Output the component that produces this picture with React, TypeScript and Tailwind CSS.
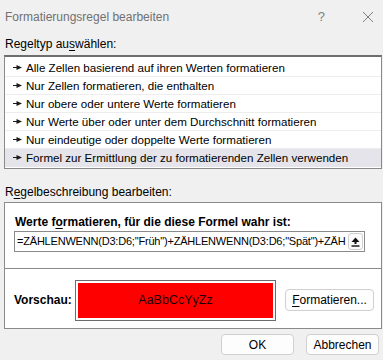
import React from "react";

const ruleTypes = [
    "Alle Zellen basierend auf ihren Werten formatieren",
    "Nur Zellen formatieren, die enthalten",
    "Nur obere oder untere Werte formatieren",
    "Nur Werte über oder unter dem Durchschnitt formatieren",
    "Nur eindeutige oder doppelte Werte formatieren",
    "Formel zur Ermittlung der zu formatierenden Zellen verwenden",
];

function RowArrow() {
    return (
        <svg width="9" height="7" viewBox="0 0 9 7" className="shrink-0">
            <rect x="0" y="3" width="5" height="1" fill="#1a1a1a" />
            <polygon points="3.5,1 9,3.5 3.5,6" fill="#1a1a1a" />
        </svg>
    );
}

function UploadIcon() {
    return (
        <svg width="9" height="10" viewBox="0 0 9 10">
            <polygon points="4.5,0.5 8.5,5 5.5,5 5.5,7 3.5,7 3.5,5 0.5,5" fill="#111" />
            <rect x="0.5" y="8.3" width="8" height="1.4" fill="#111" />
        </svg>
    );
}

export default function App() {
    return (
        <div
            className="w-[383px] h-[360px] bg-[#f0f0f0] overflow-hidden flex flex-col text-[12px] text-black"
            style={{ fontFamily: '"Liberation Sans", Arial, sans-serif' }}
        >
            {/* Title bar */}
            <div className="h-[33px] flex items-center justify-between pl-[5px] pr-[9px]">
                <span className="text-[12px] text-[#707070]">Formatierungsregel bearbeiten</span>
                <div className="flex items-center gap-[37px] text-[#808080]">
                    <span className="text-[13px]">?</span>
                    <svg width="12" height="12" viewBox="0 0 12 12">
                        <path d="M1 1 L11 11 M11 1 L1 11" stroke="#808080" strokeWidth="1" />
                    </svg>
                </div>
            </div>

            {/* Rule type */}
            <div className="pl-[5px] h-[22px] flex items-center leading-none">
                Regeltyp au<span className="underline underline-offset-2">s</span>wählen:
            </div>
            <div className="ml-[4px] mr-px h-[114px] bg-white border border-[#8a8a8a] border-t-2 border-t-[#6e6e6e] pt-[2px] flex flex-col text-[11.6px]">
                {ruleTypes.map((t, i) => (
                    <div
                        key={t}
                        className={`h-[18px] flex items-center gap-[4px] pl-[8px] border-b ${
                            i === ruleTypes.length - 1 ? "bg-[#e4e4ea] border-transparent" : "border-[#ededed]"
                        }`}
                    >
                        <RowArrow />
                        <span className="leading-none whitespace-nowrap">{t}</span>
                    </div>
                ))}
            </div>

            {/* Rule description */}
            <div className="pl-[5px] h-[33px] flex items-end pb-[4px] leading-none">
                R<span className="underline underline-offset-2">e</span>gelbeschreibung bearbeiten:
            </div>
            <div className="ml-[4px] mr-px h-[127px] bg-white border border-[#8a8a8a] flex flex-col">
                <div className="h-[66px] border-b border-[#8a8a8a] flex flex-col pl-[9px] pr-[16px]">
                    <div className="h-[27px] flex items-end pb-[2px] pl-[1px] font-bold leading-none">
                        Werte f<span className="underline underline-offset-2">o</span>rmatieren, für die diese Formel wahr ist:
                    </div>
                    <div className="mt-[1px] h-[21px] border border-[#8a8a8a] flex items-center pl-[2px] pr-[1px]">
                        <span className="flex-1 whitespace-nowrap overflow-hidden leading-none text-[11px] tracking-[-0.2px]">
                            =ZÄHLENWENN(D3:D6;"Früh")+ZÄHLENWENN(D3:D6;"Spät")+ZÄH
                        </span>
                        <div className="w-[15px] h-[17px] rounded-[3px] border border-[#cfcfcf] bg-[#fbfbfb] flex items-center justify-center">
                            <UploadIcon />
                        </div>
                    </div>
                </div>
                <div className="flex-1 flex items-center pl-[9px] pr-[6px] pt-[3px]">
                    <span className="w-[61px] font-bold leading-none">Vorschau:</span>
                    <div className="w-[201px] h-[41px] border border-[#6b6b6b] p-[2px] bg-white">
                        <div className="w-full h-full bg-[#ff0000] flex items-center justify-center text-[12.5px] text-[#1a0000]">
                            AaBbCcYyZz
                        </div>
                    </div>
                    <button className="ml-[9px] w-[89px] h-[22px] rounded-[4px] border border-[#d0d0d0] bg-[#fdfdfd] flex items-center justify-center leading-none">
                        <span className="underline underline-offset-2">F</span>ormatieren...
                    </button>
                </div>
            </div>

            {/* Buttons */}
            <div className="flex justify-end gap-[12px] pr-[4px] pt-[5px]">
                <button className="w-[73px] h-[21px] rounded-[4px] border border-[#d0d0d0] bg-[#fdfdfd] leading-none">
                    OK
                </button>
                <button className="w-[73px] h-[21px] rounded-[4px] border border-[#d0d0d0] bg-[#fdfdfd] leading-none">
                    Abbrechen
                </button>
            </div>
        </div>
    );
}
